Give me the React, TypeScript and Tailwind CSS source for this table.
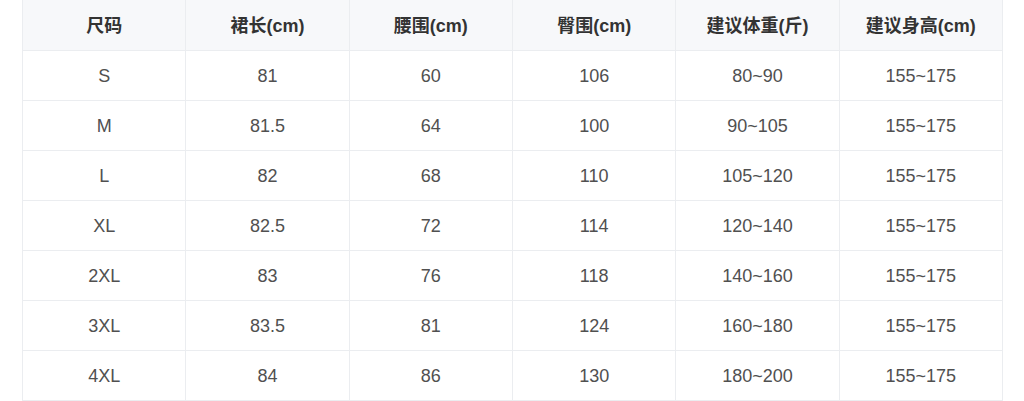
const headers = ['尺码', '裙长(cm)', '腰围(cm)', '臀围(cm)', '建议体重(斤)', '建议身高(cm)'];

const rows = [
  ['S', '81', '60', '106', '80~90', '155~175'],
  ['M', '81.5', '64', '100', '90~105', '155~175'],
  ['L', '82', '68', '110', '105~120', '155~175'],
  ['XL', '82.5', '72', '114', '120~140', '155~175'],
  ['2XL', '83', '76', '118', '140~160', '155~175'],
  ['3XL', '83.5', '81', '124', '160~180', '155~175'],
  ['4XL', '84', '86', '130', '180~200', '155~175'],
];

export default function App() {
  return (
    <div
      className="w-[1024px] h-[401px] bg-white pl-[22px]"
      style={{ fontFamily: '"Liberation Sans", "Noto Sans CJK SC", sans-serif' }}
    >
      <table className="w-[981px] table-fixed border-collapse text-[18px]">
        <thead>
          <tr className="h-[50px] bg-[#f7f8fa]">
            {headers.map((h) => (
              <th
                key={h}
                className="border border-[#ebedf0] border-t-0 pt-[3px] font-semibold text-[#333333] text-center"
              >
                {h}
              </th>
            ))}
          </tr>
        </thead>
        <tbody>
          {rows.map((r) => (
            <tr key={r[0]} className="h-[50px]">
              {r.map((c, i) => (
                <td key={i} className="border border-[#ebedf0] pt-[2px] text-center text-[#505050]">
                  {c}
                </td>
              ))}
            </tr>
          ))}
        </tbody>
      </table>
    </div>
  );
}
